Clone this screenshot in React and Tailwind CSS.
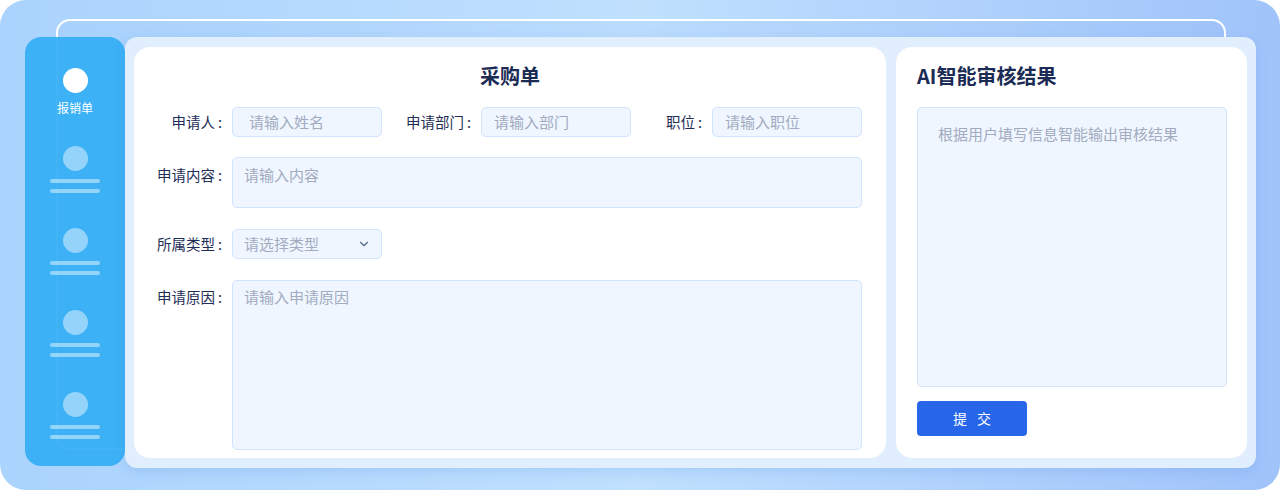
import React from 'react';
import { ChevronDown } from 'lucide-react';

const font = { fontFamily: '"Noto Sans CJK SC", "Noto Sans", sans-serif' };

function NavPlaceholder() {
    return (
        <div className="flex flex-col items-center">
            <div className="h-[25px] w-[25px] rounded-full bg-white/45" />
            <div className="mt-[8px] h-[4px] w-[50px] rounded-full bg-white/45" />
            <div className="mt-[6px] h-[4px] w-[50px] rounded-full bg-white/45" />
        </div>
    );
}

// label with the slightly spaced colon used in the form
function Label({ text, width, className = '' }) {
    return (
        <span className={`mr-[10px] text-right text-[14.5px] text-[#1f2e57] ${width} ${className}`}>
            {text}
            <span className="ml-[3px]">:</span>
        </span>
    );
}

function Field({ placeholder, className = '' }) {
    return (
        <div
            className={`flex h-[30px] w-[150px] items-center rounded-[5px] border border-[#d2e4fb] bg-[#eff6ff] px-[12px] text-[15px] text-[#a2abc0] ${className}`}
        >
            {placeholder}
        </div>
    );
}

export default function App() {
    return (
        <div className="h-[490px] w-[1280px] bg-white" style={font}>
            <div className="relative flex h-full items-start rounded-[26px] bg-linear-to-r from-[#aad3fd] via-[#c0e0fe] to-[#a0c3fa] pl-[25px] pt-[37px]">
                {/* decorative frame behind the panels */}
                <div className="pointer-events-none absolute left-[56px] top-[19px] h-[431px] w-[1170px] rounded-[14px] border-2 border-white bg-[#8cb8f5]/10" />

                {/* Sidebar */}
                <div className="relative flex h-[429px] w-[100px] flex-col items-center rounded-[16px] bg-[#34aef5]/[0.93] pt-[31px]">
                    <div className="h-[25px] w-[25px] rounded-full bg-white" />
                    <span className="mt-[7px] text-[12px] leading-[16px] text-white">报销单</span>
                    <div className="mt-[30px] flex flex-col gap-[35px]">
                        <NavPlaceholder />
                        <NavPlaceholder />
                        <NavPlaceholder />
                        <NavPlaceholder />
                    </div>
                </div>

                {/* Main panel */}
                <div className="relative flex h-[431px] w-[1131px] gap-[10px] rounded-[12px] bg-[#e1eefd] px-[9px] py-[10px] shadow-[0_4px_12px_rgba(70,130,230,0.18)]">
                    {/* Purchase form */}
                    <div className="w-[752px] rounded-[16px] bg-white pt-[15px]">
                        <h2 className="text-center text-[20px] font-bold leading-[28px] text-[#1b2b54]">采购单</h2>

                        <div className="mt-[17px] flex items-center">
                            <Label text="申请人" width="w-[88px]" />
                            <Field placeholder="请输入姓名" className="pl-[16px]" />
                            <Label text="申请部门" width="w-[89px]" />
                            <Field placeholder="请输入部门" />
                            <Label text="职位" width="w-[71px]" />
                            <Field placeholder="请输入职位" />
                        </div>

                        <div className="mt-[20px] flex">
                            <Label text="申请内容" width="w-[88px]" className="pt-[8px] leading-[20px]" />
                            <div className="h-[51px] w-[630px] rounded-[5px] border border-[#d2e4fb] bg-[#eff6ff] px-[11px] pt-[6px] text-[15px] leading-[22px] text-[#a2abc0]">
                                请输入内容
                            </div>
                        </div>

                        <div className="mt-[21px] flex items-center">
                            <Label text="所属类型" width="w-[88px]" />
                            <div className="flex h-[30px] w-[150px] items-center justify-between rounded-[5px] border border-[#d2e4fb] bg-[#eff6ff] pl-[11px] pr-[10px] text-[15px] text-[#a2abc0]">
                                请选择类型
                                <ChevronDown size={14} strokeWidth={2} className="text-[#56658a]" />
                            </div>
                        </div>

                        <div className="mt-[21px] flex">
                            <Label text="申请原因" width="w-[88px]" className="pt-[7px] leading-[20px]" />
                            <div className="h-[170px] w-[630px] rounded-[5px] border border-[#d2e4fb] bg-[#eff6ff] px-[11px] pt-[5px] text-[15px] leading-[22px] text-[#a2abc0]">
                                请输入申请原因
                            </div>
                        </div>
                    </div>

                    {/* AI result */}
                    <div className="flex w-[351px] flex-col rounded-[16px] bg-white pl-[21px] pt-[15px]">
                        <h2 className="text-[20px] font-bold leading-[28px] text-[#1b2b54]">AI智能审核结果</h2>
                        <div className="mt-[17px] h-[280px] w-[310px] rounded-[5px] border border-[#d2e4fb] bg-[#eff6ff] px-[20px] pt-[15px] text-[15px] leading-[22px] text-[#a2abc0]">
                            根据用户填写信息智能输出审核结果
                        </div>
                        <button className="mt-[14px] flex h-[35px] w-[110px] items-center justify-center gap-[10px] rounded-[4px] bg-[#2766e9] text-[14px] text-white">
                            <span>提</span>
                            <span>交</span>
                        </button>
                    </div>
                </div>
            </div>
        </div>
    );
}
